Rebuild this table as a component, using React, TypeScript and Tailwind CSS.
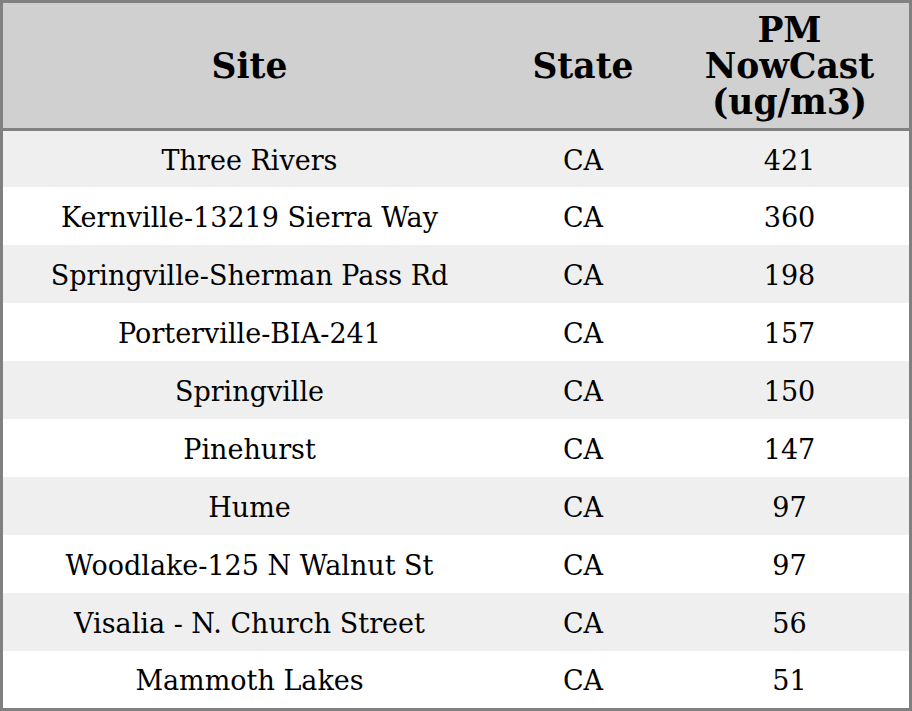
import React from "react";

const rows: [string, string, string][] = [
  ["Three Rivers", "CA", "421"],
  ["Kernville-13219 Sierra Way", "CA", "360"],
  ["Springville-Sherman Pass Rd", "CA", "198"],
  ["Porterville-BIA-241", "CA", "157"],
  ["Springville", "CA", "150"],
  ["Pinehurst", "CA", "147"],
  ["Hume", "CA", "97"],
  ["Woodlake-125 N Walnut St", "CA", "97"],
  ["Visalia - N. Church Street", "CA", "56"],
  ["Mammoth Lakes", "CA", "51"],
];

export default function App() {
  return (
    <div className="w-[912px] h-[711px] bg-white" style={{ fontFamily: '"DejaVu Serif", serif' }}>
      <div className="w-[912px] h-[711px] border-[3px] border-[#808080] flex flex-col text-black">
        <div className="grid grid-cols-[493px_174px_239px] h-[125px] bg-[#d0d0d0] border-b-[3px] border-[#808080] box-content font-bold text-[34.5px] leading-[36px] shrink-0">
          <div className="flex items-center justify-center text-center">Site</div>
          <div className="flex items-center justify-center text-center">State</div>
          <div className="flex items-center justify-center text-center">
            PM
            <br />
            NowCast
            <br />
            (ug/m3)
          </div>
        </div>
        <div className="flex flex-col text-[27px]">
          {rows.map((r, i) => (
            <div
              key={i}
              className={`grid grid-cols-[493px_174px_239px] items-center pt-[4px] ${
                i === 0 ? "h-[56px]" : i === rows.length - 1 ? "h-[57px]" : "h-[58px]"
              } ${i % 2 === 0 ? "bg-[#efefef]" : "bg-white"}`}
            >
              <div className="text-center">{r[0]}</div>
              <div className="text-center">{r[1]}</div>
              <div className="text-center">{r[2]}</div>
            </div>
          ))}
        </div>
      </div>
    </div>
  );
}
